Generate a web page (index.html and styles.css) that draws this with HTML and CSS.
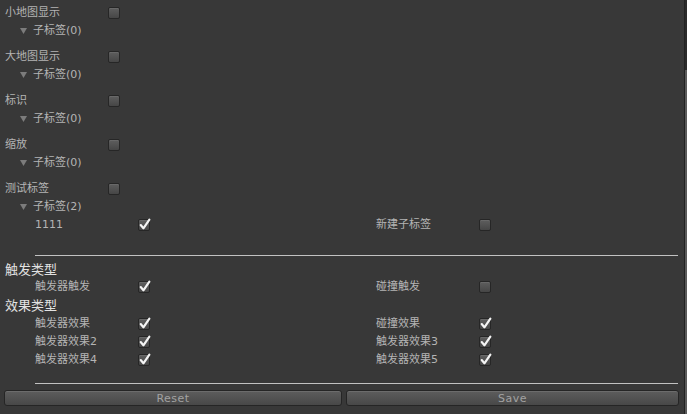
FILE: index.html
```html
<!DOCTYPE html>
<html lang="zh">
<head>
  <meta charset="UTF-8" />
  <title>标签设置</title>
  <link rel="stylesheet" href="styles.css">
</head>
<body>

<div class="window">
  <div class="content">

    <div class="group">
      <div class="row"><span class="label">小地图显示</span><span class="check"></span></div>
      <div class="row sub"><svg class="arrow" viewBox="0 0 7 6"><polygon points="0,0 7,0 3.5,6"/></svg><span class="label">子标签(0)</span></div>
    </div>

    <div class="group">
      <div class="row"><span class="label">大地图显示</span><span class="check"></span></div>
      <div class="row sub"><svg class="arrow" viewBox="0 0 7 6"><polygon points="0,0 7,0 3.5,6"/></svg><span class="label">子标签(0)</span></div>
    </div>

    <div class="group">
      <div class="row"><span class="label">标识</span><span class="check"></span></div>
      <div class="row sub"><svg class="arrow" viewBox="0 0 7 6"><polygon points="0,0 7,0 3.5,6"/></svg><span class="label">子标签(0)</span></div>
    </div>

    <div class="group">
      <div class="row"><span class="label">缩放</span><span class="check"></span></div>
      <div class="row sub"><svg class="arrow" viewBox="0 0 7 6"><polygon points="0,0 7,0 3.5,6"/></svg><span class="label">子标签(0)</span></div>
    </div>

    <div class="group last">
      <div class="row"><span class="label">测试标签</span><span class="check"></span></div>
      <div class="row sub"><svg class="arrow" viewBox="0 0 7 6"><polygon points="0,0 7,0 3.5,6"/></svg><span class="label">子标签(2)</span></div>
      <div class="pairs">
        <div class="row"><span class="label">1111</span><span class="check on"><svg viewBox="0 0 12 12"><path d="M2.5 6.5 L5 9.5 L10.5 1.5"/></svg></span></div>
        <div class="row"><span class="label">新建子标签</span><span class="check"></span></div>
      </div>
    </div>

    <div class="rule"></div>

    <h2 class="heading first">触发类型</h2>
    <div class="pairs">
      <div class="row"><span class="label">触发器触发</span><span class="check on"><svg viewBox="0 0 12 12"><path d="M2.5 6.5 L5 9.5 L10.5 1.5"/></svg></span></div>
      <div class="row"><span class="label">碰撞触发</span><span class="check"></span></div>
    </div>

    <h2 class="heading">效果类型</h2>
    <div class="pairs effects">
      <div class="row"><span class="label">触发器效果</span><span class="check on"><svg viewBox="0 0 12 12"><path d="M2.5 6.5 L5 9.5 L10.5 1.5"/></svg></span></div>
      <div class="row"><span class="label">碰撞效果</span><span class="check on"><svg viewBox="0 0 12 12"><path d="M2.5 6.5 L5 9.5 L10.5 1.5"/></svg></span></div>
      <div class="row"><span class="label">触发器效果2</span><span class="check on"><svg viewBox="0 0 12 12"><path d="M2.5 6.5 L5 9.5 L10.5 1.5"/></svg></span></div>
      <div class="row"><span class="label">触发器效果3</span><span class="check on"><svg viewBox="0 0 12 12"><path d="M2.5 6.5 L5 9.5 L10.5 1.5"/></svg></span></div>
      <div class="row"><span class="label">触发器效果4</span><span class="check on"><svg viewBox="0 0 12 12"><path d="M2.5 6.5 L5 9.5 L10.5 1.5"/></svg></span></div>
      <div class="row"><span class="label">触发器效果5</span><span class="check on"><svg viewBox="0 0 12 12"><path d="M2.5 6.5 L5 9.5 L10.5 1.5"/></svg></span></div>
    </div>

    <div class="rule bottom"></div>

    <div class="buttons">
      <button>Reset</button>
      <button>Save</button>
    </div>

  </div>
  <div class="scrollbar"><div class="thumb"></div></div>
</div>

</body>
</html>
```

FILE: styles.css
```css
:root {
  --bg: #383838;
  --text: #b4b4b4;
  --heading: #e2e2e2;
  --line: #c2c2c2;
}
* {
  box-sizing: border-box;
}
body {
  margin: 0;
  background: var(--bg);
  color: var(--text);
  font-family: "DejaVu Sans", "Noto Sans CJK SC", sans-serif;
  font-size: 11px;
  overflow: hidden;
}
.window {
  display: flex;
  width: 687px;
  height: 414px;
}
.content {
  flex: 1;
  padding: 3px 0 0 5px;
}
.group {
  margin-bottom: 8px;
}
.group.last {
  margin-bottom: 0;
}
.row {
  display: flex;
  align-items: center;
  height: 18px;
  line-height: 16px;
}
.label {
  width: 103px;
  padding-top: 2px;
  white-space: nowrap;
}
.sub .label {
  width: auto;
}
.sub {
  padding-left: 15px;
}
.arrow {
  width: 7px;
  height: 6px;
  margin: 2px 6px 0 0;
  fill: #7c7c7c;
}
.check {
  position: relative;
  width: 12px;
  height: 12px;
  margin-top: 2px;
  border: 1px solid #262626;
  border-radius: 2px;
  background: linear-gradient(#5e5e5e, #464646);
  box-shadow: inset 0 1px 0 rgba(255,255,255,0.08);
}
.check svg {
  position: absolute;
  left: -1px;
  top: -2px;
  width: 13px;
  height: 13px;
  fill: none;
  stroke: #f4f4f4;
  stroke-width: 2;
  stroke-linecap: round;
  stroke-linejoin: round;
}
.pairs {
  display: grid;
  grid-template-columns: 341px 1fr;
  padding-left: 30px;
}
.effects {
  margin-top: 1px;
}
.rule {
  height: 1px;
  background: var(--line);
  margin: 22px 6px 0 30px;
}
.rule.bottom {
  margin-top: 15px;
}
.heading {
  margin: 2px 0 0;
  height: 16px;
  line-height: 17px;
  font-size: 13px;
  font-weight: normal;
  color: var(--heading);
}
.heading.first {
  margin-top: 5px;
}
.buttons {
  display: grid;
  grid-template-columns: 338px 333px;
  gap: 4px;
  margin: 6px 0 0 -1px;
}
button {
  height: 16px;
  padding: 1px 0 0;
  border: 1px solid #252525;
  border-radius: 3px;
  background: linear-gradient(#5d5d5d, #484848);
  box-shadow: inset 0 1px 0 rgba(255,255,255,0.1);
  color: #a2a2a2;
  font-family: "DejaVu Sans", sans-serif;
  font-size: 11px;
  letter-spacing: 0.5px;
  line-height: 13px;
}
.scrollbar {
  width: 3px;
  background: #2a2a2a;
  border-left: 1px solid #222;
  display: flex;
  flex-direction: column;
}
.thumb {
  flex: 1;
  margin-top: 70px;
  background: #5a5a5a;
}
```
